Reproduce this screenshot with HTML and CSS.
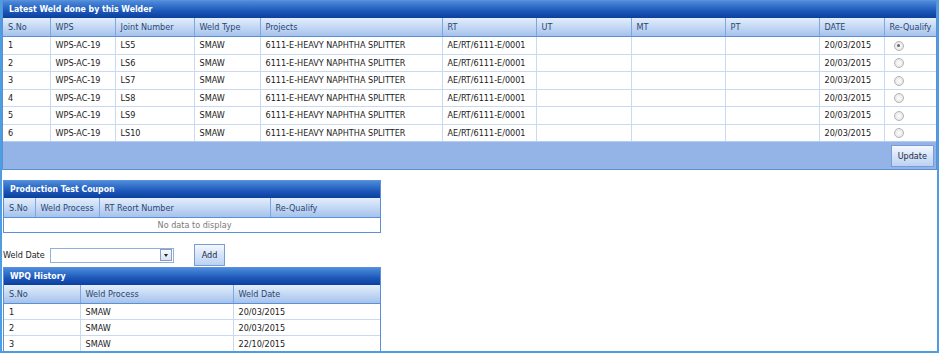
FILE: index.html
```html
<!DOCTYPE html>
<html lang="en">
<head>
<meta charset="UTF-8">
<title>Welder Details</title>
<link rel="stylesheet" href="styles.css">
</head>
<body>
<div class="page">
  <div class="grid main-grid">
    <div class="grid-title">Latest Weld done by this Welder</div>
    <table>
      <colgroup>
        <col style="width:47px"><col style="width:65px"><col style="width:79px"><col style="width:66px">
        <col style="width:182px"><col style="width:94px"><col style="width:95px"><col style="width:94px">
        <col style="width:94px"><col style="width:65px"><col>
      </colgroup>
      <thead>
        <tr><th>S.No</th><th>WPS</th><th>Joint Number</th><th>Weld Type</th><th>Projects</th><th>RT</th><th>UT</th><th>MT</th><th>PT</th><th>DATE</th><th>Re-Qualify</th></tr>
      </thead>
      <tbody>
        <tr><td>1</td><td>WPS-AC-19</td><td>LS5</td><td>SMAW</td><td>6111-E-HEAVY NAPHTHA SPLITTER</td><td>AE/RT/6111-E/0001</td><td></td><td></td><td></td><td>20/03/2015</td><td><span class="radio checked"></span></td></tr>
        <tr><td>2</td><td>WPS-AC-19</td><td>LS6</td><td>SMAW</td><td>6111-E-HEAVY NAPHTHA SPLITTER</td><td>AE/RT/6111-E/0001</td><td></td><td></td><td></td><td>20/03/2015</td><td><span class="radio"></span></td></tr>
        <tr><td>3</td><td>WPS-AC-19</td><td>LS7</td><td>SMAW</td><td>6111-E-HEAVY NAPHTHA SPLITTER</td><td>AE/RT/6111-E/0001</td><td></td><td></td><td></td><td>20/03/2015</td><td><span class="radio"></span></td></tr>
        <tr><td>4</td><td>WPS-AC-19</td><td>LS8</td><td>SMAW</td><td>6111-E-HEAVY NAPHTHA SPLITTER</td><td>AE/RT/6111-E/0001</td><td></td><td></td><td></td><td>20/03/2015</td><td><span class="radio"></span></td></tr>
        <tr><td>5</td><td>WPS-AC-19</td><td>LS9</td><td>SMAW</td><td>6111-E-HEAVY NAPHTHA SPLITTER</td><td>AE/RT/6111-E/0001</td><td></td><td></td><td></td><td>20/03/2015</td><td><span class="radio"></span></td></tr>
        <tr><td>6</td><td>WPS-AC-19</td><td>LS10</td><td>SMAW</td><td>6111-E-HEAVY NAPHTHA SPLITTER</td><td>AE/RT/6111-E/0001</td><td></td><td></td><td></td><td>20/03/2015</td><td><span class="radio"></span></td></tr>
      </tbody>
    </table>
    <div class="grid-footer"><button class="btn">Update</button></div>
  </div>

  <div class="grid small-grid coupon-grid">
    <div class="grid-title">Production Test Coupon</div>
    <table>
      <colgroup><col style="width:31px"><col style="width:64px"><col style="width:171px"><col></colgroup>
      <thead>
        <tr><th>S.No</th><th>Weld Process</th><th>RT Reort Number</th><th>Re-Qualify</th></tr>
      </thead>
      <tbody>
        <tr><td colspan="4" class="empty">No data to display</td></tr>
      </tbody>
    </table>
  </div>

  <div class="date-row">
    <label>Weld Date</label>
    <div class="combo"><span class="combo-btn"><span class="arrow"></span></span></div>
    <button class="btn add-btn">Add</button>
  </div>

  <div class="grid small-grid history-grid">
    <div class="grid-title">WPQ History</div>
    <table>
      <colgroup><col style="width:76px"><col style="width:153px"><col></colgroup>
      <thead>
        <tr><th>S.No</th><th>Weld Process</th><th>Weld Date</th></tr>
      </thead>
      <tbody>
        <tr><td>1</td><td>SMAW</td><td>20/03/2015</td></tr>
        <tr><td>2</td><td>SMAW</td><td>20/03/2015</td></tr>
        <tr><td>3</td><td>SMAW</td><td>22/10/2015</td></tr>
      </tbody>
    </table>
  </div>
</div>
</body>
</html>
```

FILE: styles.css
```css
body{margin:0;font-family:"DejaVu Sans Condensed","DejaVu Sans",sans-serif;font-size:9px;color:#1a1a1a;background:#fff}
.page{width:939px;height:353px;box-sizing:border-box;border:2px solid #4d9de0;border-top:none;overflow:hidden}
.grid{border:1px solid #5b8fd6;background:#fff}
.grid table{width:100%;border-collapse:collapse;table-layout:fixed}
.grid-title{height:17px;line-height:17px;padding-left:6px;color:#fff;font-weight:bold;font-size:8.7px;background:linear-gradient(#4b8bdc,#1c57b8 60%,#0b3f9f)}
.grid th{height:18px;padding:0 0 0 5px;text-align:left;font-weight:normal;color:#2b4670;background:linear-gradient(#e3edfb,#c4d8f4 50%,#a5c2ec);border-left:1px solid #7ea6e0;border-bottom:1px solid #5b8fd6;white-space:nowrap;overflow:hidden}
.grid th:first-child{border-left:none}
.grid td{height:16.5px;padding:0 0 0 5px;border-left:1px solid #c9d9f0;border-bottom:1px solid #c9d9f0;white-space:nowrap;overflow:hidden}
.grid td:first-child{border-left:none}
.grid tbody tr:last-child td{border-bottom:none}
.main-grid td:last-child{padding-left:9px}
.radio{display:inline-block;width:10px;height:10px;border:1px solid #b4b4b4;border-radius:50%;background:radial-gradient(#fdfdfd,#e0e0e0);vertical-align:middle;box-sizing:border-box;position:relative}
.radio.checked::after{content:"";position:absolute;left:2.5px;top:2.5px;width:3px;height:3px;border-radius:50%;background:#666}
.grid-footer{height:27px;background:#94b4e7;border-top:1px solid #b7cdf0;display:flex;justify-content:flex-end;align-items:center;padding-right:2px}
.btn{font-family:inherit;font-size:9px;color:#1a2a44;height:22px;padding:0 6px;border:1px solid #7a9cd6;background:linear-gradient(#f4f8fe,#d6e4f8 50%,#bcd2f2);cursor:pointer}
.small-grid{width:376px;margin-left:1px}
.coupon-grid{margin-top:10px}
.coupon-grid th{height:19px}
.coupon-grid td{height:14px}
.history-grid td{height:15px}
.empty{text-align:center;color:#7a7a7a;padding:0}
.date-row{display:flex;align-items:center;height:22px;margin:11px 0 1px 1px}
.date-row label{width:47px}
.combo{width:121px;height:13px;border:1px solid #8fb0e0;background:#fff;display:flex;justify-content:flex-end;align-items:center;padding-right:1px}
.combo-btn{width:10px;height:10px;border:1px solid #8a9dbd;background:linear-gradient(#f6f8fc,#d8e2f2);display:flex;align-items:center;justify-content:center}
.arrow{width:0;height:0;border-left:2px solid transparent;border-right:2px solid transparent;border-top:3px solid #222}
.add-btn{margin-left:20px;width:31px;padding:0}
```
